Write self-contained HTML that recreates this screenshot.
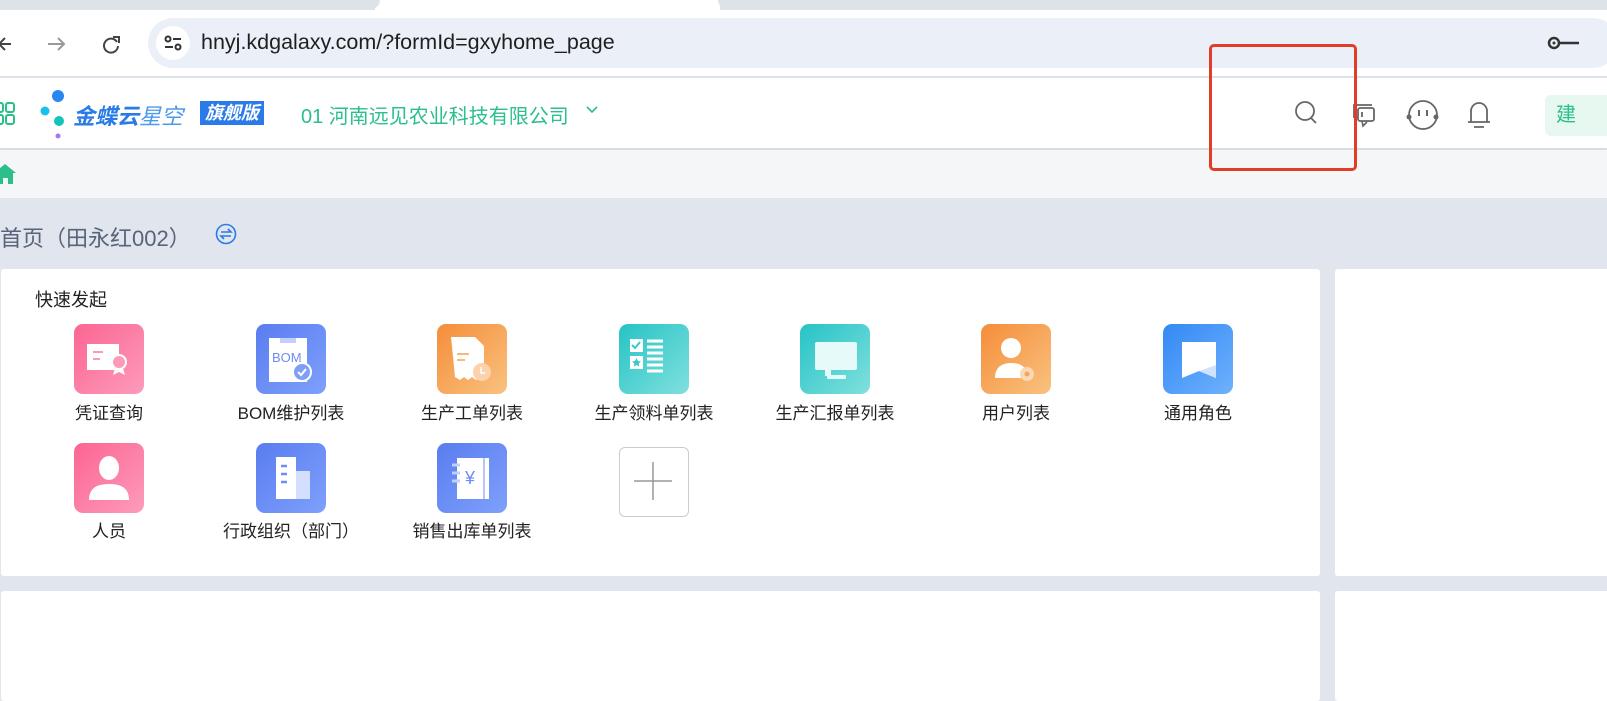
<!DOCTYPE html>
<html><head><meta charset="utf-8"><style>
*{margin:0;padding:0;box-sizing:border-box}
body{width:1607px;height:691px;overflow:hidden;position:relative;background:#e1e5ed;font-family:"Liberation Sans","Noto Sans CJK SC",sans-serif}
.a{position:absolute}
.ic{position:absolute;width:70px;height:70px;border-radius:9px;overflow:hidden}
.lb{position:absolute;font-size:17px;color:#222;text-align:center;width:180px;white-space:nowrap}
.pink{background:linear-gradient(135deg,#fc6592,#fd9bbb)}
.blue{background:linear-gradient(135deg,#5a7df0,#7ea0fc)}
.orange{background:linear-gradient(135deg,#f58d3a,#f9c27e)}
.teal{background:linear-gradient(135deg,#26c3c5,#80e0de)}
.blue2{background:linear-gradient(135deg,#3489f4,#6eb1fd)}
</style></head><body>
<div class="a" style="left:0;top:0;width:1607px;height:10px;background:#dee3ea"></div>
<div class="a" style="left:375px;top:0;width:345px;height:10px;background:#fff"></div>
<div class="a" style="left:0;top:0;width:380px;height:9px;background:#dee3ea;border-radius:0 0 10px 0"></div>
<div class="a" style="left:718px;top:0;width:900px;height:9px;background:#dee3ea;border-radius:0 0 0 10px"></div>
<div class="a" style="left:0;top:10px;width:1607px;height:67px;background:#fff;border-bottom:1px solid #dcdfe3"></div>
<svg class="a" style="left:0;top:34px" width="130" height="20"><path d="M11 10H0M5 4L-1 10l6 6" stroke="#444" stroke-width="2" fill="none"/><path d="M48 10h16M58 4l6 6-6 6" stroke="#999" stroke-width="2" fill="none"/><path d="M117 8a7 7 0 1 0 1 4" stroke="#444" stroke-width="2" fill="none"/><path d="M113 3h6v6" stroke="#444" stroke-width="2" fill="none"/></svg>
<div class="a" style="left:148px;top:18px;width:1470px;height:50px;background:#ebf0f8;border-radius:25px"></div>
<div class="a" style="left:156px;top:26px;width:34px;height:34px;background:#fff;border-radius:17px"></div>
<svg class="a" style="left:163px;top:33px" width="20" height="20"><circle cx="5" cy="6" r="2.5" stroke="#333" stroke-width="2" fill="none"/><path d="M10 6h8M2 14h8" stroke="#333" stroke-width="2"/><circle cx="15" cy="14" r="2.5" stroke="#333" stroke-width="2" fill="none"/></svg>
<div class="a" style="left:201px;top:30px;font-size:21.5px;color:#1f1f1f">hnyj.kdgalaxy.com/?formId=gxyhome_page</div>
<svg class="a" style="left:1547px;top:35px" width="60" height="16"><circle cx="7" cy="8" r="5" stroke="#333" stroke-width="2.5" fill="none"/><circle cx="7" cy="8" r="1.5" fill="#333"/><path d="M12 8h20" stroke="#333" stroke-width="2.5"/></svg>
<div class="a" style="left:0;top:78px;width:1607px;height:70px;background:#fff;box-shadow:0 2px 4px rgba(0,0,0,.06)"></div>
<svg class="a" style="left:0;top:102px" width="16" height="24"><rect x="-6" y="1" width="9" height="9" rx="2" stroke="#2bbf8a" stroke-width="2" fill="none"/><rect x="6" y="1" width="8" height="9" rx="2" stroke="#2bbf8a" stroke-width="2" fill="none"/><rect x="-6" y="13" width="9" height="9" rx="2" stroke="#2bbf8a" stroke-width="2" fill="none"/><rect x="6" y="13" width="8" height="9" rx="2" stroke="#2bbf8a" stroke-width="2" fill="none"/></svg>
<svg class="a" style="left:38px;top:88px" width="30" height="52"><circle cx="20" cy="8" r="6" fill="#2a86f0"/><circle cx="7" cy="23" r="4.5" fill="#19c0e8"/><circle cx="21" cy="33" r="5" fill="#14c4b8"/><circle cx="20" cy="48" r="2.5" fill="#a477f7"/></svg>
<div class="a" style="left:73px;top:99px;font-size:22px;font-weight:bold;color:#2a7be8;font-style:italic">金蝶云<span style="font-weight:normal;color:#4b9af0">星空</span></div>
<div class="a" style="left:200px;top:101px;width:64px;height:24px;background:#2a7be8;color:#fff;font-size:18px;line-height:24px;text-align:center;font-weight:bold;font-style:italic">旗舰版</div>
<div class="a" style="left:301px;top:100px;font-size:20px;color:#2bbf8a">01 河南远见农业科技有限公司</div>
<svg class="a" style="left:585px;top:105px" width="14" height="10"><path d="M2 2l5 5 5-5" stroke="#2bbf8a" stroke-width="1.6" fill="none"/></svg>
<svg class="a" style="left:1290px;top:98px" width="200" height="32"><circle cx="15" cy="13" r="9" stroke="#666" stroke-width="1.8" fill="none"/><path d="M21 20l5 5" stroke="#666" stroke-width="1.8"/>
<path d="M64 20v-13h18" stroke="#666" stroke-width="1.8" fill="none"/><rect x="68" y="10" width="16" height="13" rx="2" stroke="#666" stroke-width="1.8" fill="none"/><path d="M72 23l1 5 4-4" stroke="#666" stroke-width="1.6" fill="none"/><path d="M72 14v5" stroke="#666" stroke-width="1.8"/>
<path d="M119 17a14 14 0 0 1 28 0a14 14 0 0 1-28 0" stroke="#666" stroke-width="1.8" fill="none"/><circle cx="119" cy="19" r="2.5" fill="#666"/><circle cx="146" cy="19" r="2.5" fill="#666"/><path d="M129 12v6M137 12v6" stroke="#666" stroke-width="2"/>
<path d="M181 24v-11a8 8 0 0 1 16 0v11M178 24h22M184 29h10" stroke="#666" stroke-width="1.8" fill="none"/></svg>
<div class="a" style="left:1545px;top:95px;width:70px;height:41px;background:#e6f8f0;border-radius:6px;font-size:20px;color:#2bbf8a;line-height:41px;padding-left:11px">建</div>
<div class="a" style="left:0;top:150px;width:1607px;height:48px;background:#f5f6f8"></div>
<svg class="a" style="left:0;top:163px" width="16" height="22"><path d="M-6 10l11-9 11 9h-3v11h-5v-6h-5v6h-5v-11z" fill="#2bbf8a"/></svg>
<div class="a" style="left:0;top:221px;font-size:22px;color:#58647a">首页（田永红002）</div>
<svg class="a" style="left:215px;top:223px" width="22" height="22"><circle cx="11" cy="11" r="9.5" stroke="#2a7be8" stroke-width="1.6" fill="none"/><path d="M6 9h10l-3-3M16 13H6l3 3" stroke="#2a7be8" stroke-width="1.6" fill="none"/></svg>
<div class="a" style="left:1px;top:269px;width:1319px;height:307px;background:#fff;border-radius:3px"></div>
<div class="a" style="left:1335px;top:269px;width:280px;height:307px;background:#fff;border-radius:3px"></div>
<div class="a" style="left:1px;top:591px;width:1319px;height:110px;background:#fff;border-radius:3px"></div>
<div class="a" style="left:1335px;top:591px;width:280px;height:110px;background:#fff;border-radius:3px"></div>
<div class="a" style="left:35px;top:286px;font-size:18px;color:#222">快速发起</div>

<div class="ic pink" style="left:74px;top:324px"><svg width="70" height="70"><rect x="13" y="20" width="32" height="26" fill="#fff"/><path d="M19 28h10M19 35h7" stroke="#fd9ab6" stroke-width="2"/><circle cx="45" cy="38" r="7" fill="#fd9ab6" stroke="#fff" stroke-width="2"/><path d="M41 44l-2 7 6-3 6 3-2-7" fill="#fff"/></svg></div>
<div class="lb" style="left:19px;top:399px">凭证查询</div>
<div class="ic blue" style="left:256px;top:324px"><svg width="70" height="70"><rect x="13" y="14" width="38" height="44" fill="#fff"/><rect x="24" y="14" width="16" height="5" fill="#c3cffb"/><text x="16" y="38" font-size="13" fill="#6d8cf4" font-family="Liberation Sans">BOM</text><circle cx="46" cy="48" r="9" fill="#7e9ef8" stroke="#fff" stroke-width="2"/><path d="M42 48l3 3 5-6" stroke="#fff" stroke-width="2" fill="none"/></svg></div>
<div class="lb" style="left:201px;top:399px">BOM维护列表</div>
<div class="ic orange" style="left:437px;top:324px"><svg width="70" height="70"><path d="M14 13h24l9 9v34l-4-3-4 3-4-3-4 3-4-3-4 3-5-3z" fill="#fff"/><path d="M20 30h12M20 36h8" stroke="#f9b97a" stroke-width="2"/><circle cx="45" cy="48" r="9" fill="#fbd2ac"/><path d="M44 43v6h4" stroke="#fff" stroke-width="1.5" fill="none"/></svg></div>
<div class="lb" style="left:382px;top:399px">生产工单列表</div>
<div class="ic teal" style="left:619px;top:324px"><svg width="70" height="70"><rect x="11" y="15" width="13" height="13" fill="#fff"/><rect x="11" y="32" width="13" height="13" fill="#fff"/><path d="M13 21l3 3 5-6" stroke="#3cc8c8" stroke-width="2" fill="none"/><path d="M17.5 34l1.5 3 3 .5-2.3 2 .6 3-2.8-1.5-2.8 1.5.6-3-2.3-2 3-.5z" fill="#3cc8c8"/><path d="M28 17h16M28 23h16M28 29h16M28 35h16M28 41h16M28 47h16" stroke="#fff" stroke-width="3"/></svg></div>
<div class="lb" style="left:564px;top:399px">生产领料单列表</div>
<div class="ic teal" style="left:800px;top:324px"><svg width="70" height="70"><rect x="15" y="18" width="42" height="28" rx="2" fill="#e6fafa"/><rect x="25" y="46" width="6" height="6" fill="#e6fafa"/><rect x="27" y="51" width="19" height="4" rx="1" fill="#e6fafa"/></svg></div>
<div class="lb" style="left:745px;top:399px">生产汇报单列表</div>
<div class="ic orange" style="left:981px;top:324px"><svg width="70" height="70"><circle cx="30" cy="24" r="10" fill="#fff"/><path d="M14 54c0-10 6-15 16-15s14 4 16 9l-6 6z" fill="#fff"/><circle cx="46" cy="50" r="7" fill="#fbd8b5"/><circle cx="46" cy="50" r="2.5" fill="#f7a45b"/></svg></div>
<div class="lb" style="left:926px;top:399px">用户列表</div>
<div class="ic blue2" style="left:1163px;top:324px"><svg width="70" height="70"><path d="M19 18h34v36l-17-7-17 7z" fill="#fff"/><path d="M36 47l17-6v13z" fill="#d0e3fd"/></svg></div>
<div class="lb" style="left:1108px;top:399px">通用角色</div>

<div class="ic pink" style="left:74px;top:443px"><svg width="70" height="70"><ellipse cx="35" cy="25" rx="10" ry="12" fill="#fff"/><path d="M15 57c0-12 8-16 20-16s20 4 20 16z" fill="#fff"/></svg></div>
<div class="lb" style="left:19px;top:517px">人员</div>
<div class="ic blue" style="left:256px;top:443px"><svg width="70" height="70"><rect x="20" y="14" width="20" height="42" fill="#fff"/><rect x="40" y="28" width="14" height="28" fill="#d4defd"/><path d="M25 23h6M25 31h6M25 39h6" stroke="#6d8cf4" stroke-width="2.5"/></svg></div>
<div class="lb" style="left:201px;top:517px">行政组织（部门）</div>
<div class="ic blue" style="left:437px;top:443px"><svg width="70" height="70"><rect x="20" y="15" width="32" height="41" fill="#fff"/><path d="M15 22h8M15 30h8M15 38h8" stroke="#c3cffb" stroke-width="3"/><path d="M47 15v41" stroke="#6d8cf4" stroke-width="1"/><text x="28" y="41" font-size="18" fill="#6d8cf4" font-family="Liberation Sans">¥</text></svg></div>
<div class="lb" style="left:382px;top:517px">销售出库单列表</div>
<div class="a" style="left:619px;top:447px;width:70px;height:70px;border:1.5px solid #ccc;border-radius:6px"><svg width="67" height="67"><path d="M33 14v38M14 33h38" stroke="#999" stroke-width="1.5"/></svg></div>
<div class="a" style="left:1209px;top:44px;width:148px;height:127px;border:3px solid #e23d28;border-radius:5px;z-index:10"></div>
</body></html>
